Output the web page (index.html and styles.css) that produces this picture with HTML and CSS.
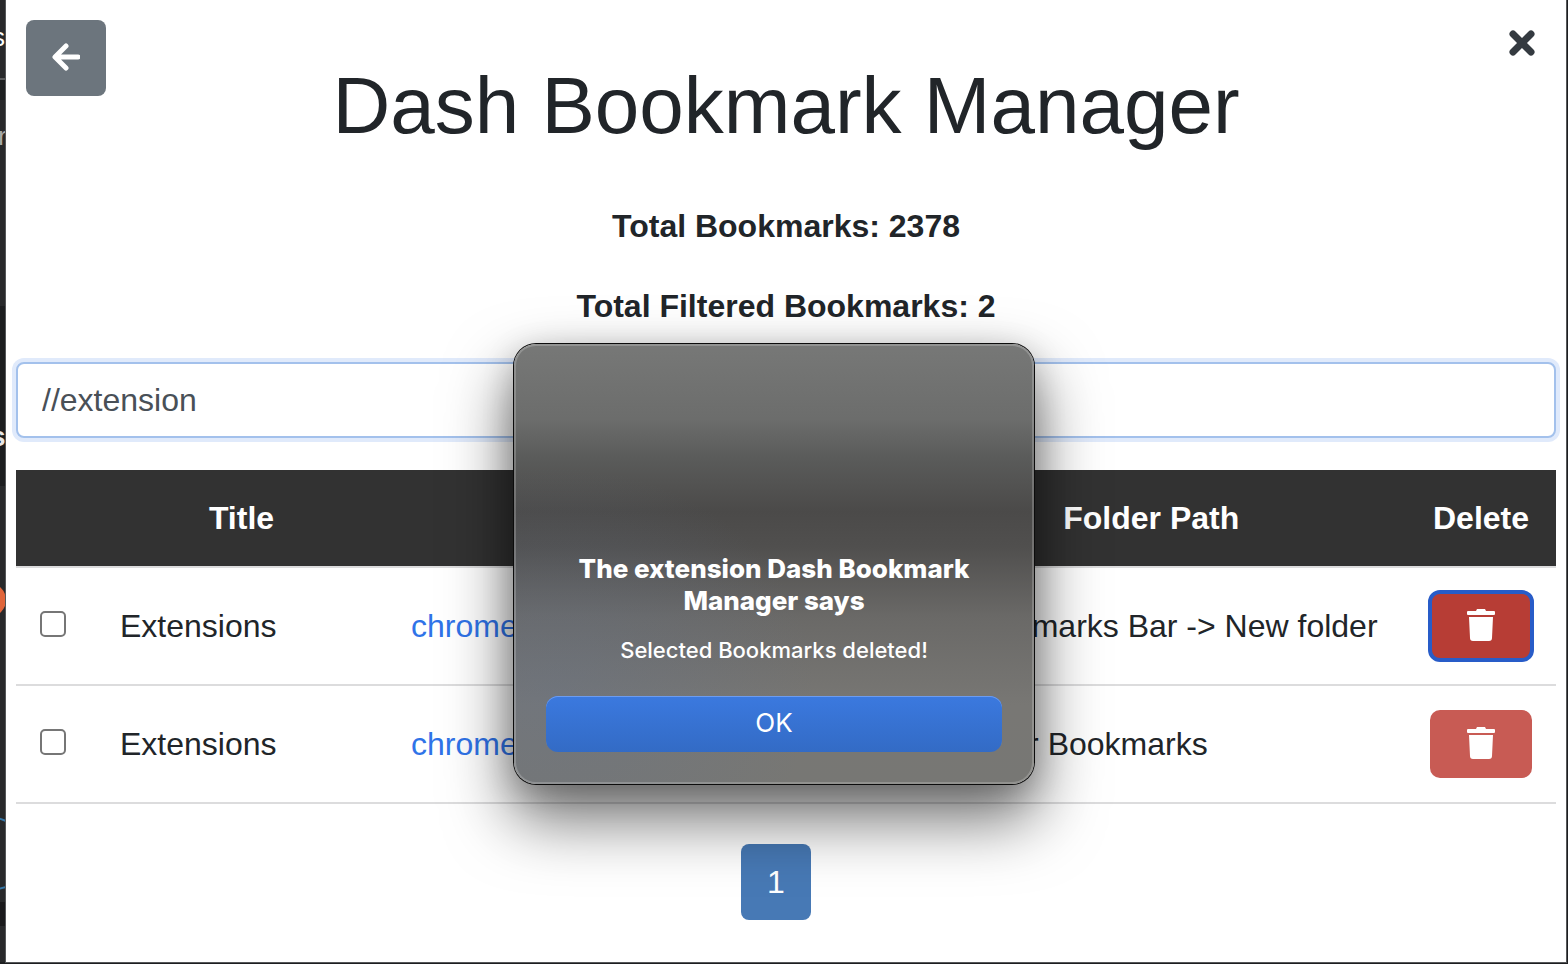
FILE: index.html
```html
<!DOCTYPE html>
<html lang="en">
<head>
<meta charset="utf-8">
<meta name="viewport" content="width=device-width, initial-scale=1">
<title>Dash Bookmark Manager</title>
<link rel="stylesheet" href="styles.css">
</head>
<body>
<div class="desktop">
  <svg class="backdrop" width="5" height="962" viewBox="0 0 5 962" aria-hidden="true">
    <rect width="5" height="962" fill="#28292b"/>
    <rect y="80" width="5" height="20" fill="#1d1f21"/>
    <rect y="78" width="5" height="2" fill="#5b5c5d"/>
    <rect y="306" width="5" height="180" fill="#1c1d1f"/>
    <rect y="902" width="5" height="24" fill="#1a1a1c"/>
    <text x="-8" y="46" font-size="26" fill="#ffffff">s</text>
    <text x="-2" y="145" font-size="26" fill="#aaaaaa">r</text>
    <text x="-10" y="446" font-size="28" font-weight="700" fill="#e6e6e6">s</text>
    <circle cx="-11" cy="600" r="17" fill="#e0653a"/>
    <path d="M-2 818 L6 821 M-2 889 L6 887" stroke="#3577a8" stroke-width="2" fill="none"/>
  </svg>
  <main class="popup">
    <header class="top">
      <button class="back" type="button" aria-label="Back">
        <svg width="28" height="28" viewBox="0 0 28 28" aria-hidden="true"><path d="M26 14H4M14 3L3 14L14 25" fill="none" stroke="#fff" stroke-width="5" stroke-linecap="round" stroke-linejoin="round"/></svg>
      </button>
      <button class="close" type="button" aria-label="Close">
        <svg width="26" height="26" viewBox="0 0 26 26" aria-hidden="true"><path d="M4 4L22 22M22 4L4 22" fill="none" stroke="#343a40" stroke-width="7" stroke-linecap="round"/></svg>
      </button>
    </header>
    <h1>Dash Bookmark Manager</h1>
    <p class="count">Total Bookmarks: 2378</p>
    <p class="count">Total Filtered Bookmarks: 2</p>
    <input class="search" type="text" aria-label="Search bookmarks" value="//extension">
    <table class="bookmarks">
      <colgroup><col class="col-check"><col class="col-title"><col><col><col class="col-delete"></colgroup>
      <thead>
        <tr><td></td><th scope="col">Title</th><th scope="col">URL</th><th scope="col">Folder Path</th><th scope="col">Delete</th></tr>
      </thead>
      <tbody>
        <tr>
          <td><input class="check" type="checkbox" aria-label="Select bookmark 1"></td>
          <td>Extensions</td>
          <td><a href="#">chrome://extensions</a></td>
          <td>-&gt; Bookmarks Bar -&gt; New folder</td>
          <td><button class="delete active" type="button" aria-label="Delete bookmark 1"><svg width="28" height="32" viewBox="0 0 28 32" aria-hidden="true"><path d="M1 2H9L10 0H18L19 2H27Q28 2 28 3V5Q28 6 27 6H1Q0 6 0 5V3Q0 2 1 2ZM2 8H26L25 29Q25 32 22 32H6Q3 32 3 29Z" fill="#fff"/></svg></button></td>
        </tr>
        <tr>
          <td><input class="check" type="checkbox" aria-label="Select bookmark 2"></td>
          <td>Extensions</td>
          <td><a href="#">chrome://extensions</a></td>
          <td>-&gt; Other Bookmarks</td>
          <td><button class="delete" type="button" aria-label="Delete bookmark 2"><svg width="28" height="32" viewBox="0 0 28 32" aria-hidden="true"><path d="M1 2H9L10 0H18L19 2H27Q28 2 28 3V5Q28 6 27 6H1Q0 6 0 5V3Q0 2 1 2ZM2 8H26L25 29Q25 32 22 32H6Q3 32 3 29Z" fill="#fff"/></svg></button></td>
        </tr>
      </tbody>
    </table>
    <nav class="pager" aria-label="Pages"><button class="page" type="button">1</button></nav>
  </main>
  <section class="dialog" role="alertdialog" aria-labelledby="dialog-title" aria-describedby="dialog-text">
    <h2 id="dialog-title">The extension Dash Bookmark Manager says</h2>
    <p id="dialog-text">Selected Bookmarks deleted!</p>
    <button class="ok" type="button">OK</button>
  </section>
</div>
</body>
</html>
```

FILE: styles.css
```css
* { box-sizing: border-box; }

body {
  margin: 0;
  background: #1d1e20;
  color: #212529;
  font: 32px/48px "Liberation Sans", Arial, sans-serif;
}

button, input { font: inherit; }

.desktop {
  position: relative;
  display: flex;
  min-height: 100vh;
  padding: 0 1px 1px 0;
  overflow: hidden;
}

.backdrop { flex: none; overflow: hidden; }

.popup {
  flex: 1;
  min-width: 0;
  padding: 20px 10px 24px;
  border: solid #555759;
  border-width: 0 1px 1px;
  background: #fff;
}

.top {
  display: flex;
  justify-content: space-between;
  align-items: flex-start;
  height: 38px;
  padding: 0 21px 0 10px;
}

.back {
  display: grid;
  place-items: center;
  width: 80px;
  height: 76px;
  padding: 0 0 2px;
  border: 0;
  border-radius: 8px;
  background: #6c757d;
}

.close {
  display: flex;
  padding: 10px 0;
  border: 0;
  background: none;
}

h1 {
  margin: 0 0 48px;
  font-size: 80px;
  font-weight: 400;
  line-height: 96px;
  text-align: center;
}

.count {
  margin: 0 0 32px;
  font-weight: 700;
  text-align: center;
}

.search {
  display: block;
  width: 100%;
  height: 76px;
  padding: 12px 24px;
  border: 2px solid #a3c1ec;
  border-radius: 8px;
  outline: 0;
  box-shadow: 0 0 0 4px #e0eafb;
  color: #495057;
}

.bookmarks {
  width: 100%;
  margin-top: 32px;
  border-collapse: separate;
  border-spacing: 0;
  table-layout: fixed;
}

.col-check { width: 80px; }
.col-title { width: 291px; }
.col-delete { width: 150px; }

.bookmarks th,
.bookmarks td {
  padding: 24px;
  border-bottom: 2px solid #dcdcdd;
  white-space: nowrap;
}

.bookmarks thead { background: #323232; color: #fff; }
.bookmarks tbody td { height: 118px; }
.bookmarks a { color: #2f73e8; text-decoration: none; }

.check {
  display: block;
  width: 26px;
  height: 26px;
  margin: 0 0 4px;
  border: 2px solid #767676;
  border-radius: 5px;
  background: #fff;
  appearance: none;
}

.delete {
  display: grid;
  place-items: center;
  width: 102px;
  height: 68px;
  padding: 0 0 2px;
  border: 0;
  border-radius: 10px;
  background: #c85b54;
}

.delete.active {
  background: #b73d35;
  outline: 4px solid #285cc8;
  outline-offset: -2px;
}

.pager {
  display: flex;
  justify-content: center;
  margin: 40px 20px 0 0;
}

.page {
  width: 70px;
  height: 76px;
  padding: 0;
  border: 0;
  border-radius: 8px;
  background: #4779b5;
  color: #fff;
}

.dialog {
  position: absolute;
  top: 344px;
  left: calc(50% - 270px);
  width: 520px;
  padding: 209px 32px 32px;
  border-radius: 22px;
  background:
    radial-gradient(ellipse 260px 220px at 8% 78%, rgba(100, 115, 140, 0.35), rgba(100, 115, 140, 0)),
    linear-gradient(#777877, #6c6d6c 17%, #5a5b5a 26%, #4b4a49 38%, #504f4e 46%, #6a6967 62%, #787774 82%, #777774);
  box-shadow:
    inset 0 0 0 2px rgba(255, 255, 255, 0.2),
    0 0 0 1px #0c0c0c,
    0 32px 64px 4px rgba(0, 0, 0, 0.55),
    0 8px 32px rgba(0, 0, 0, 0.2);
  color: #fff;
  font-family: Inter, sans-serif;
  text-align: center;
}

.dialog h2 {
  margin: 0 0 18px;
  font-size: 26px;
  font-weight: 800;
  line-height: 32px;
}

.dialog p {
  margin: 0 0 31px;
  font-size: 22px;
  font-weight: 500;
  line-height: 30px;
}

.ok {
  display: block;
  width: 100%;
  height: 56px;
  padding: 0 0 2px;
  border: 0;
  border-radius: 12px;
  background: linear-gradient(#3b79df, #336bc5);
  box-shadow: inset 0 1px #6c9cf0;
  color: #fff;
  font-size: 26px;
}
```
